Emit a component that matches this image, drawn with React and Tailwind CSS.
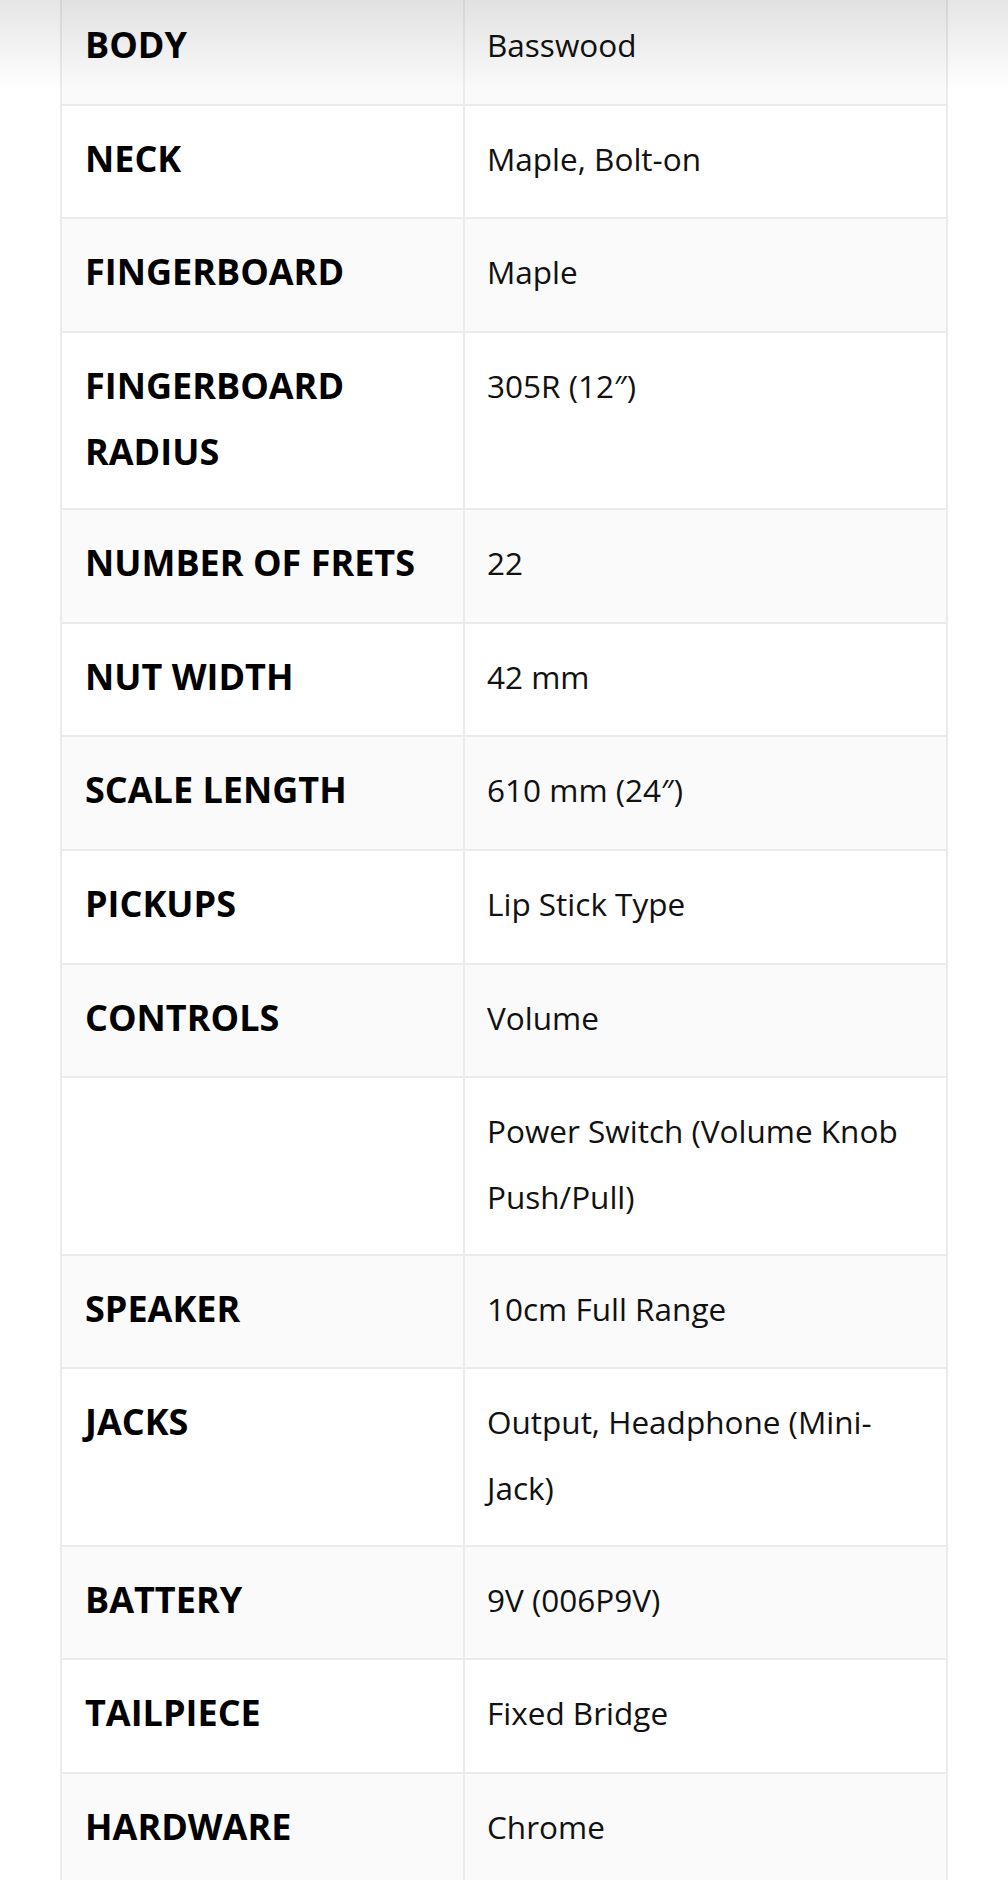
const specs = [
  { label: 'BODY', value: 'Basswood' },
  { label: 'NECK', value: 'Maple, Bolt-on' },
  { label: 'FINGERBOARD', value: 'Maple' },
  { label: 'FINGERBOARD RADIUS', value: '305R (12″)' },
  { label: 'NUMBER OF FRETS', value: '22' },
  { label: 'NUT WIDTH', value: '42 mm' },
  { label: 'SCALE LENGTH', value: '610 mm (24″)' },
  { label: 'PICKUPS', value: 'Lip Stick Type' },
  { label: 'CONTROLS', value: 'Volume' },
  { label: '', value: 'Power Switch (Volume Knob Push/Pull)' },
  { label: 'SPEAKER', value: '10cm Full Range' },
  { label: 'JACKS', value: 'Output, Headphone (Mini-Jack)' },
  { label: 'BATTERY', value: '9V (006P9V)' },
  { label: 'TAILPIECE', value: 'Fixed Bridge' },
  { label: 'HARDWARE', value: 'Chrome' },
];

const App = () => {
  return (
    <div className="relative min-h-[1880px] overflow-hidden bg-white font-['Open_Sans',sans-serif]">
      {/* Spec table */}
      <div className="ml-[60px] -mt-[8px] w-[888px] border-x-2 border-[#ebebeb]">
        {specs.map((row, idx) => (
          <div
            key={idx}
            className={`flex min-h-[113.6px] border-b-2 border-[#ebebeb] ${idx % 2 === 0 ? 'bg-[#fafafa]' : 'bg-white'}`}
          >
            <div className="w-[403px] shrink-0 border-r-2 border-[#ebebeb] pl-[23px] pr-[20px] pt-[20px] pb-[23.5px] text-[36px] font-bold leading-[66px] text-black">
              {row.label}
            </div>
            <div className="flex-1 pl-[22px] pr-[20px] pt-[20px] pb-[23.5px] text-[31.5px] leading-[66px] text-[#111]">
              {row.value}
            </div>
          </div>
        ))}
      </div>

      {/* Header shadow */}
      <div className="pointer-events-none absolute inset-x-0 top-0 h-[90px] bg-linear-to-b from-black/10 to-transparent" />
    </div>
  );
};

export default App;
